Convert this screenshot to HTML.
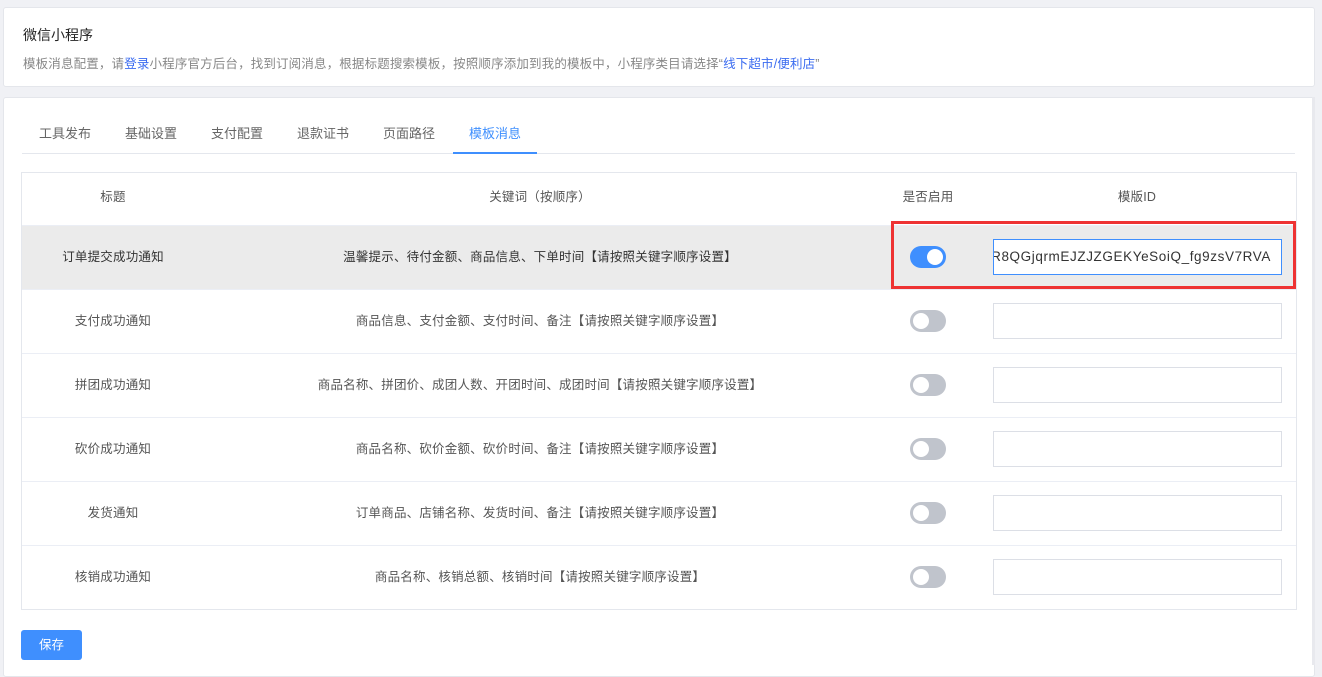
<!DOCTYPE html>
<html><head><meta charset="utf-8"><style>
*{box-sizing:border-box;margin:0;padding:0}
body{width:1322px;height:665px;overflow:hidden;background:#f0f1f5;font-family:"Liberation Sans","Noto Sans CJK SC",sans-serif;position:relative;color:#333}
.card{position:absolute;background:#fff;border:1px solid #e4e6eb;border-radius:3px}
.t{position:absolute;font-size:13px;white-space:nowrap}
.tab{position:absolute;top:123px;font-size:13px;color:#666}
.row{position:absolute;left:22px;width:1274px;height:64px;border-top:1px solid #ebeef5}
.c{position:absolute;top:-1px;height:64px;line-height:64px;font-size:12.5px;letter-spacing:0.2px;color:#555;text-align:center;transform:translateX(-50%);white-space:nowrap}
.sw{position:absolute;width:36px;height:22px;border-radius:11px;background:#c0c4cc}
.sw::after{content:"";position:absolute;left:3px;top:3px;width:16px;height:16px;border-radius:50%;background:#fff}
.sw.on{background:#3f8ffe}.sw.on::after{left:17px}
.in{position:absolute;left:971px;top:13px;width:289px;height:36px;border:1px solid #dcdfe6;background:#fff}
</style></head><body>
<div class="card" style="left:3px;top:7px;width:1312px;height:80px"></div>
<div class="t" style="left:23px;top:25px;font-size:14px;color:#222">微信小程序</div>
<div class="t" style="left:23px;top:53px;font-size:12.5px;color:#888;letter-spacing:0.15px">模板消息配置，请<span style="color:#3b6cf0">登录</span>小程序官方后台，找到订阅消息，根据标题搜索模板，按照顺序添加到我的模板中，小程序类目请选择“<span style="color:#3b6cf0">线下超市/便利店</span>”</div>
<div class="card" style="left:3px;top:97px;width:1312px;height:580px"></div>
<div style="position:absolute;left:1312px;top:97px;width:3px;height:568px;background:#e8e9ee"></div>
<div class="tab" style="left:39px">工具发布</div>
<div class="tab" style="left:125px">基础设置</div>
<div class="tab" style="left:211px">支付配置</div>
<div class="tab" style="left:297px">退款证书</div>
<div class="tab" style="left:383px">页面路径</div>
<div class="tab" style="left:469px;color:#3f8ffe">模板消息</div>
<div style="position:absolute;left:22px;top:153px;width:1273px;height:1px;background:#e4e7ed"></div>
<div style="position:absolute;left:453px;top:152px;width:84px;height:2px;background:#3f8ffe"></div>
<div style="position:absolute;left:21px;top:172px;width:1276px;height:438px;border:1px solid #e4e7ed"></div>
<div class="row" style="top:173px;height:52px;border:none"><div class="c" style="left:91px;height:52px;line-height:50px;color:#555">标题</div><div class="c" style="left:518px;height:52px;line-height:50px">关键词（按顺序）</div><div class="c" style="left:906px;height:52px;line-height:50px">是否启用</div><div class="c" style="left:1115px;height:52px;line-height:50px">模版ID</div></div>
<div class="row" style="top:225px;background:#ebebeb"><div class="c" style="left:91px;color:#333">订单提交成功通知</div><div class="c" style="left:518px;color:#333">温馨提示、待付金额、商品信息、下单时间【请按照关键字顺序设置】</div><div class="sw on" style="left:888px;top:20px"></div><div class="in" style="border-color:#3f8ffe;overflow:hidden;font-size:13.5px;letter-spacing:0.6px;line-height:34px;color:#333;direction:rtl;text-align:right;padding-right:10px;white-space:nowrap"><span style="direction:ltr;unicode-bidi:bidi-override">R8QGjqrmEJZJZGEKYeSoiQ_fg9zsV7RVA</span></div></div>
<div style="position:absolute;left:891px;top:221px;width:405px;height:68px;border:3px solid #ee3333"></div>
<div class="row" style="top:289px"><div class="c" style="left:91px">支付成功通知</div><div class="c" style="left:518px">商品信息、支付金额、支付时间、备注【请按照关键字顺序设置】</div><div class="sw" style="left:888px;top:20px"></div><div class="in"></div></div>
<div class="row" style="top:353px"><div class="c" style="left:91px">拼团成功通知</div><div class="c" style="left:518px">商品名称、拼团价、成团人数、开团时间、成团时间【请按照关键字顺序设置】</div><div class="sw" style="left:888px;top:20px"></div><div class="in"></div></div>
<div class="row" style="top:417px"><div class="c" style="left:91px">砍价成功通知</div><div class="c" style="left:518px">商品名称、砍价金额、砍价时间、备注【请按照关键字顺序设置】</div><div class="sw" style="left:888px;top:20px"></div><div class="in"></div></div>
<div class="row" style="top:481px"><div class="c" style="left:91px">发货通知</div><div class="c" style="left:518px">订单商品、店铺名称、发货时间、备注【请按照关键字顺序设置】</div><div class="sw" style="left:888px;top:20px"></div><div class="in"></div></div>
<div class="row" style="top:545px"><div class="c" style="left:91px">核销成功通知</div><div class="c" style="left:518px">商品名称、核销总额、核销时间【请按照关键字顺序设置】</div><div class="sw" style="left:888px;top:20px"></div><div class="in"></div></div>
<div style="position:absolute;left:21px;top:630px;width:61px;height:30px;background:#3f8ffe;border-radius:3px;color:#fff;font-size:12.5px;text-align:center;line-height:30px">保存</div>
</body></html>
